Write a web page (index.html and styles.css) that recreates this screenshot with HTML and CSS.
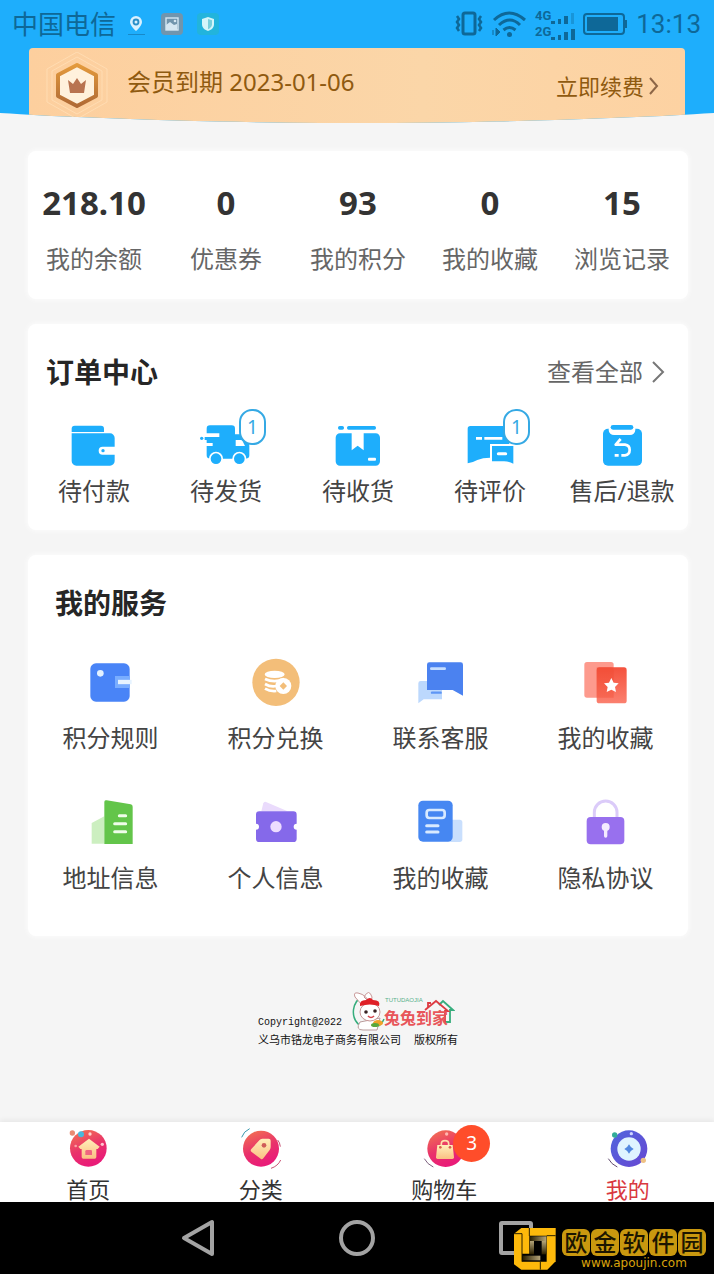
FILE: index.html
```
<!DOCTYPE html>
<html lang="zh-CN">
<head>
  <meta charset="UTF-8" />
  <meta name="viewport" content="width=device-width, initial-scale=1" />
  <title>我的</title>
  <link rel="stylesheet" href="styles.css">
</head>
<body>

<div class="status-bar">
  <span class="carrier">中国电信</span>
  <div class="status-apps">
    <svg width="24" height="24" viewBox="0 0 24 24"><path d="M12 4a6 6 0 0 0-6 6c0 4 6 9 6 9s6-5 6-9a6 6 0 0 0-6-6z" fill="#d9f1ff"/><circle cx="12" cy="10" r="3.4" fill="#2a8fc8"/><circle cx="12" cy="10" r="1.5" fill="#d9f1ff"/><path d="M4 22.5h17" stroke="#1889c9"/></svg>
    <svg width="24" height="24" viewBox="0 0 24 24"><rect x="1" y="1" width="22" height="22" rx="4" fill="#7195ad"/><rect x="6" y="6" width="12" height="12" fill="none" stroke="#d5e7f2" stroke-width="1.4"/><path d="M6 18V13l4-3 4 3 3-1v6z" fill="#d5e7f2"/><circle cx="15" cy="9" r="1.3" fill="#d5e7f2"/></svg>
    <svg width="24" height="24" viewBox="0 0 24 24"><rect x="1" y="1" width="22" height="22" rx="4" fill="#22b4dc"/><path d="M12 5l6 2v5c0 4-3 6-6 7-3-1-6-3-6-7V7z" fill="#d4f5fa"/><path d="M12 7l4 1.300v4c0 2.500-2 4-4 5z" fill="#79cfdc"/></svg>
  </div>
  <div class="status-right">
    <svg width="28" height="26" viewBox="0 0 28 26" fill="none" stroke="#0e6898"><rect x="8" y="2" width="12" height="21" rx="2" stroke-width="3"/><path d="M2 5l2 3-2 3 2 3-2 3 2 3M26 5l-2 3 2 3-2 3 2 3-2 3" stroke-width="2.500"/></svg>
    <svg width="36" height="28" viewBox="0 0 36 28" fill="none" stroke="#0e6898" stroke-width="3"><path d="M3 10q15-14 31 0M8 15q11-10 21 0M12.500 20q6-5 12 0"/><circle cx="18.500" cy="24.500" r="2.500" fill="#0e6898" stroke="none"/><path d="M5 18v8l4-4zM2 20v5" fill="#0e6898" stroke-width="1"/></svg>
    <div class="signals">
      <div class="signal"><span>4G</span><svg width="24" height="12" viewBox="0 0 24 12" fill="#0e6898"><path d="M0 9h4v3H0zM7 7h3v5H7zM13 4h4v8h-4z"/><path d="M20 1h3v11h-3z" opacity=".35"/></svg></div>
      <div class="signal"><span>2G</span><svg width="24" height="12" viewBox="0 0 24 12" fill="#0e6898"><path d="M0 9h4v3H0zM7 7h3v5H7zM13 4h4v8h-4zM20 1h4v11h-4z"/></svg></div>
    </div>
    <svg width="45" height="24" viewBox="0 0 45 24"><rect x="1" y="2" width="40" height="20" rx="3" fill="none" stroke="#0e6898" stroke-width="2"/><rect x="4" y="5" width="31" height="14" fill="#0e6898"/><path d="M42 8h2v8h-2z" fill="#0e6898"/></svg>
    <time>13:13</time>
  </div>
</div>

<header class="hero">
  <div class="member">
    <svg class="medal" width="66" height="66" viewBox="0 0 66 66">
      <defs><linearGradient id="gold" x1="0" y1="0" x2="0" y2="1"><stop offset="0" stop-color="#e39a3c"/><stop offset="1" stop-color="#b06a35"/></linearGradient></defs>
      <g fill="none" stroke="#ffdcb2"><path d="M33 0l30 17v33L33 67 3 50V17z"/><path d="M33 5l25 14v29L33 62 8 48V19z"/></g>
      <path d="M33 13l19 10v21L33 54 14 44V23z" fill="#fff1dc" stroke="url(#gold)" stroke-width="4" stroke-linejoin="round"/>
      <path d="M24 28l5 4 4-6 4 6 5-4-2 13H26z" fill="#b87350"/>
    </svg>
    <span class="member-date">会员到期 2023-01-06</span>
    <a class="renew" href="#">立即续费<svg width="10" height="18" viewBox="0 0 10 18" fill="none" stroke="#8d6647" stroke-width="2"><path d="M1 1l7 8-7 8"/></svg></a>
  </div>
</header>

<main>
  <section class="card stats">
    <a href="#"><strong>218.10</strong><span>我的余额</span></a>
    <a href="#"><strong>0</strong><span>优惠券</span></a>
    <a href="#"><strong>93</strong><span>我的积分</span></a>
    <a href="#"><strong>0</strong><span>我的收藏</span></a>
    <a href="#"><strong>15</strong><span>浏览记录</span></a>
  </section>

  <section class="card orders">
    <div class="card-head">
      <h2>订单中心</h2>
      <a class="more" href="#">查看全部<svg width="13" height="22" viewBox="0 0 13 22" fill="none" stroke="#777" stroke-width="2"><path d="M1 1l10 10L1 21"/></svg></a>
    </div>
    <div class="order-list">
      <a href="#">
        <svg class="icon" viewBox="0 0 144 144" fill="#1eaefc"><path d="M5 30V20a9 9 0 0 1 9-9h79a9 9 0 0 1 9 9v10z"/><path d="M5 34h115a14 14 0 0 1 14 14v26H98a12 12 0 0 0 0 24h36v19a14 14 0 0 1-14 14H19a14 14 0 0 1-14-14z"/><circle cx="99" cy="86" r="5"/></svg>
        <span>待付款</span>
      </a>
      <a href="#">
        <svg class="icon" viewBox="0 0 144 144" fill="#1eaefc"><path d="M14 34V20a10 10 0 0 1 10-10h65a10 10 0 0 1 10 10v17h22q5 0 9 9l10 18q2 4 2 8v28q0 10-10 10H24q-10 0-10-10V72h18v-9H14v-9h-6V45h44v-11z"/><path d="M101 54h15q4 0 6 4l7 14h-28z" fill="#fff"/><circle cx="42" cy="110" r="21" fill="#fff"/><circle cx="112" cy="110" r="21" fill="#fff"/><circle cx="42" cy="110" r="16"/><circle cx="112" cy="110" r="16"/><circle cx="-1" cy="49" r="5"/></svg>
        <em class="badge">1</em>
        <span>待发货</span>
      </a>
      <a href="#">
        <svg class="icon" viewBox="0 0 144 144" fill="#1eaefc"><rect x="12" y="12" width="18" height="11" rx="5"/><rect x="39" y="12" width="87" height="11" rx="5"/><path d="M18 34h35v51l18-14 18 14V34h36a13 13 0 0 1 13 13v71a13 13 0 0 1-13 13H18a13 13 0 0 1-13-13V47a13 13 0 0 1 13-13z"/><rect x="102" y="107" width="24" height="9" rx="3" fill="#fff"/></svg>
        <span>待收货</span>
      </a>
      <a href="#">
        <svg class="icon" viewBox="0 0 144 144" fill="#1eaefc"><path d="M5 20a8 8 0 0 1 8-8h117v54H72v41q-22 0-38 7-14 8-29 10z"/><path d="M30 49h18M55 49h54" stroke="#fff" stroke-width="8"/><path d="M78 72h64v53q-14-7-28-7H78z"/><path d="M97 95h22" stroke="#fff" stroke-width="9" stroke-linecap="round"/></svg>
        <em class="badge">1</em>
        <span>待评价</span>
      </a>
      <a href="#">
        <svg class="icon" viewBox="0 0 144 144" fill="#1eaefc"><rect x="15" y="20" width="117" height="111" rx="15"/><rect x="32" y="6" width="80" height="33" rx="16" fill="#fff"/><rect x="38" y="9" width="68" height="14" rx="7"/><path d="M68 51L53 68h28q14 2 14 16t-14 16H70M62 100H50" fill="none" stroke="#fff" stroke-width="8" stroke-linejoin="round"/></svg>
        <span>售后/退款</span>
      </a>
    </div>
  </section>

  <section class="card services">
    <h2>我的服务</h2>
    <div class="service-list">
      <a href="#">
        <svg class="icon" viewBox="0 0 144 144"><rect x="10" y="16" width="118" height="115" rx="17" fill="#4984f7"/><circle cx="40" cy="46" r="10" fill="#e3f1ff"/><path d="M84 54h44v36H84z" fill="#79adff"/><path d="M93 72h41" stroke="#e6f3ff" stroke-width="13"/></svg>
        <span>积分规则</span>
      </a>
      <a href="#">
        <svg class="icon" viewBox="0 0 144 144"><circle cx="72" cy="73" r="71" fill="#f3be79"/><ellipse cx="68" cy="49" rx="30" ry="11" fill="#fff"/><path d="M39 63q28 13 58 0M39 78q17 10 34 6M39 92q15 9 34 7" fill="none" stroke="#fff" stroke-width="8"/><circle cx="94" cy="84" r="24" fill="#fff"/><path d="M94 73l11 11-11 11-11-11z" fill="#f3be79"/></svg>
        <span>积分兑换</span>
      </a>
      <a href="#">
        <svg class="icon" viewBox="0 0 144 144"><path d="M4 76q0-7 7-7h64v55H20L4 136z" fill="#bcd8fd"/><path d="M30 20q0-7 7-7h94q7 0 7 7v93l-31-17H30z" fill="#4b82f0"/><path d="M43 32h40" stroke="#c5ddff" stroke-width="8" stroke-linecap="round"/><path d="M45 104h26" stroke="#5e96f5" stroke-width="7" stroke-linecap="round"/></svg>
        <span>联系客服</span>
      </a>
      <a href="#">
        <svg class="icon" viewBox="0 0 144 144"><defs><linearGradient id="red" x1="0" y1="0" x2="0" y2="1"><stop offset="0" stop-color="#f4523d"/><stop offset="1" stop-color="#fb806f"/></linearGradient></defs><rect x="7" y="12" width="88" height="107" rx="8" fill="#fd9a8d"/><rect x="44" y="28" width="90" height="108" rx="8" fill="url(#red)"/><path d="M44 28h43q8 0 8 8v83H44z" fill="#f0472f" opacity=".35"/><path d="M88 60l7 14 15 2-11 11 3 15-14-7-14 7 3-15-11-11 15-2z" fill="#fff"/></svg>
        <span>我的收藏</span>
      </a>
      <a href="#">
        <svg class="icon" viewBox="0 0 144 144"><path d="M14 75l38-20v82H14z" fill="#ccefc0"/><path d="M52 12q0-7 7-5l72 12q6 1 6 7v112H52z" fill="#63c54a"/><path d="M97 53h19M83 77h33M83 101h33" stroke="#effde9" stroke-width="9" stroke-linecap="round"/></svg>
        <span>地址信息</span>
      </a>
      <a href="#">
        <svg class="icon" viewBox="0 0 144 144"><path d="M28 40l6-24q2-6 8-4l65 28z" fill="#eadbfc"/><path d="M22 40h102a10 10 0 0 1 10 10v27a9 9 0 0 0 0 18v27a10 10 0 0 1-10 10H22a10 10 0 0 1-10-10V95a9 9 0 0 0 0-18V50a10 10 0 0 1 10-10z" fill="#8569ea"/><circle cx="72" cy="86" r="17" fill="#eddcff"/></svg>
        <span>个人信息</span>
      </a>
      <a href="#">
        <svg class="icon" viewBox="0 0 144 144"><rect x="90" y="65" width="46" height="67" rx="8" fill="#c9dffd"/><rect x="4" y="8" width="103" height="123" rx="14" fill="#4687f2"/><rect x="29" y="36" width="54" height="24" rx="8" fill="none" stroke="#d8eaff" stroke-width="8"/><path d="M29 83h34M29 102h34" stroke="#d8eaff" stroke-width="9" stroke-linecap="round"/></svg>
        <span>我的收藏</span>
      </a>
      <a href="#">
        <svg class="icon" viewBox="0 0 144 144"><path d="M37 62V43a34 34 0 0 1 68 0v19" fill="none" stroke="#dbcbf9" stroke-width="9"/><rect x="14" y="57" width="113" height="82" rx="12" fill="#9870ee"/><circle cx="71" cy="87" r="12" fill="#f4eaff"/><path d="M71 87v27" stroke="#f4eaff" stroke-width="10" stroke-linecap="round"/></svg>
        <span>隐私协议</span>
      </a>
    </div>
  </section>

  <footer class="copyright">
    <div class="copyright-top">
      <span>Copyright@2022</span>
      <svg width="104" height="40" viewBox="0 0 104 40">
        <path d="M12 5A18 18 0 0 0 8 34M22 36q8 0 11-8" fill="none" stroke="#36ad7d" stroke-width="1.500"/>
        <path d="M7 2q-5-1-3 4l7 8 7-2q-2-8-11-10zM13 6q5-9 8 0l-1 7z" fill="#fff" stroke="#c89797"/>
        <path d="M9 31q-5 8 3 8h14l3-12z" fill="#fff" stroke="#b99c9c"/>
        <ellipse cx="19" cy="21" rx="10" ry="9" fill="#fff" stroke="#c89797"/>
        <path d="M9 15q-1-6 6-6 4-4 7 0 8 0 6 6-9-3-19 0z" fill="#df2027"/>
        <circle cx="15" cy="21" r="1.800" fill="#382222"/><circle cx="24" cy="20" r="1.800" fill="#382222"/>
        <path d="M17 25q3 3 6 0" fill="none" stroke="#d4434a" stroke-width="1.500"/>
        <ellipse cx="27" cy="32" rx="5" ry="3" fill="#f0a32a"/><ellipse cx="24" cy="34" rx="4" ry="2" fill="#59a83c"/>
        <path d="M88 14l4-4 10 9h-3v12h-6" fill="none" stroke="#36ad7d" stroke-width="1.800"/>
        <path d="M74 19l11-9 12 10h-3v12M77 16v-4h3" fill="none" stroke="#dd3b42" stroke-width="1.800"/>
        <text class="logo-sub" x="34" y="11">TUTUDAOJIA</text>
        <text class="logo-name" x="33" y="33">兔兔到家</text>
      </svg>
    </div>
    <p>义乌市锆龙电子商务有限公司&nbsp; 版权所有</p>
  </footer>
</main>

<nav class="tab-bar">
  <a href="#">
    <svg class="tab-icon" viewBox="0 0 120 120">
      <defs>
        <linearGradient id="pink" x1="0" y1="0" x2=".4" y2="1"><stop offset="0" stop-color="#f3794f"/><stop offset=".6" stop-color="#e9316b"/><stop offset="1" stop-color="#e91c78"/></linearGradient>
        <linearGradient id="cream" x1="0" y1="0" x2="0" y2="1"><stop offset="0" stop-color="#fff0ba"/><stop offset="1" stop-color="#fbc083"/></linearGradient>
      </defs>
      <circle cx="61" cy="61" r="55" fill="url(#pink)"/><path d="M63 32l32 24-6 7h-4v24q0 5-5 5H46q-5 0-5-5V63h-4l-6-7z" fill="url(#cream)"/><path d="M52 81V70q0-4 4-4h12q4 0 4 4v11z" fill="#f06580"/><circle cx="13" cy="15" r="8" fill="#e98b73"/><circle cx="39" cy="19" r="9" fill="#48b9dc"/><circle cx="66" cy="18" r="5" fill="#ffd4cc"/><circle cx="103" cy="49" r="5" fill="#ffc6d0"/><circle cx="23" cy="54" r="4" fill="#f9a0a5"/>
    </svg>
    <span>首页</span>
  </a>
  <a href="#">
    <svg class="tab-icon" viewBox="0 0 120 120"><circle cx="60" cy="62" r="54" fill="url(#pink)"/><path d="M55 37q3-5 9-5h19q6 0 6 6v19q0 5-3 9L67 91q-4 5-8 1L31 71q-4-4 0-8z" fill="url(#cream)"/><circle cx="69" cy="52" r="7" fill="#cf5c59"/><path d="M2 28Q8 10 26 2" fill="none" stroke="#3998ac" stroke-width="3"/><path d="M119 96q-8 18-29 25M110 36q7 8 8 20" fill="none" stroke="#c85373" stroke-width="3"/></svg>
    <span>分类</span>
  </a>
  <a href="#">
    <svg class="tab-icon" viewBox="0 0 120 120"><circle cx="65" cy="62" r="55" fill="url(#pink)"/><path d="M52 56V47q0-9 11-9t11 9v9" fill="none" stroke="#ffe0ac" stroke-width="5"/><path d="M40 51h46l4 37q0 5-5 5H41q-5 0-5-5z" fill="url(#cream)"/><circle cx="49" cy="58" r="4" fill="#d9604c"/><circle cx="78" cy="58" r="4" fill="#d9604c"/><circle cx="68" cy="18" r="5" fill="#ffb8b0"/><path d="M1 92q9 17 27 25" fill="none" stroke="#7f6381" stroke-width="3"/></svg>
    <em class="cart-count">3</em>
    <span>购物车</span>
  </a>
  <a class="active" href="#">
    <svg class="tab-icon" viewBox="0 0 120 120"><defs><linearGradient id="violet" x1="0" y1="0" x2="1" y2="1"><stop offset="0" stop-color="#4f66dd"/><stop offset="1" stop-color="#6847d2"/></linearGradient></defs><circle cx="63" cy="62" r="55" fill="url(#violet)"/><circle cx="63" cy="63" r="35" fill="#dff4ff"/><path d="M63 49q4 9 14 14-10 5-14 14-4-9-14-14 10-5 14-14z" fill="#5288df"/><circle cx="20" cy="21" r="8" fill="#32ad99"/><circle cx="70" cy="17" r="5" fill="#cfd6ff"/><circle cx="106" cy="97" r="8" fill="#efc184"/><path d="M1 92q9 17 27 25" fill="none" stroke="#634c70" stroke-width="3"/></svg>
    <span>我的</span>
  </a>
</nav>

<div class="system-nav">
  <button type="button" aria-label="返回"><svg width="40" height="40" viewBox="0 0 40 40"><path d="M34 4v32L6 20z"/></svg></button>
  <button type="button" aria-label="主页"><svg width="40" height="40" viewBox="0 0 40 40"><circle cx="20" cy="20" r="16"/></svg></button>
  <button type="button" aria-label="最近"><svg width="40" height="40" viewBox="0 0 40 40"><rect x="5" y="5" width="30" height="30" rx="1"/></svg></button>
  <div class="site-mark">
    <svg width="44" height="44" viewBox="0 0 132 132">
      <defs>
        <linearGradient id="foldTop" x1="0" y1="0" x2="1" y2="0"><stop offset="0" stop-color="#2b2000"/><stop offset="1" stop-color="#b5a57a"/></linearGradient>
        <linearGradient id="foldSide" x1="0" y1="0" x2="0" y2="1"><stop offset="0" stop-color="#b5a57a"/><stop offset="1" stop-color="#2b2000"/></linearGradient>
      </defs>
      <path d="M25 3h103v100l-25 25H25L3 112V20z" fill="#fdb90b"/>
      <path d="M49 26h52v78H27V80h22z" fill="#000"/>
      <path d="M51 28h49v14H51z" fill="url(#foldTop)"/>
      <path d="M86 42h14v40H86z" fill="url(#foldSide)"/>
      <path d="M30 86h52v14H30z" fill="url(#foldTop)"/>
      <path d="M51 42h12v40H51z" fill="url(#foldSide)"/>
      <path d="M49 3v24M128 26h-27M82 104v24M3 20h24v84" fill="none" stroke="#2b2000" stroke-width="3"/>
    </svg>
    <div class="site-text">
      <div class="site-name"><b>欧</b><b>金</b><b>软</b><b>件</b><b>园</b></div>
      <div class="site-url">www.apoujin.com</div>
    </div>
  </div>
</div>

</body>
</html>
```

FILE: styles.css
```
* {
  box-sizing: border-box;
}

body {
  margin: 0;
  min-height: 100vh;
  display: flex;
  flex-direction: column;
  background: #f5f5f5;
  color: #444;
  font-family: "Noto Sans", "Noto Sans CJK SC", sans-serif;
  font-size: 24px;
  line-height: 32px;
}

a {
  color: inherit;
  text-decoration: none;
}

em {
  font-style: normal;
}

svg {
  display: block;
  flex: none;
}

h2 {
  margin: 0;
  font-size: 28px;
  line-height: 36px;
  font-weight: 700;
  color: #262626;
}

/* status bar */
.status-bar {
  display: flex;
  align-items: center;
  height: 48px;
  padding: 0 13px 0 12px;
  background: #1eaefc;
  color: #0e6898;
}

.carrier {
  font-size: 26px;
}

.status-apps {
  display: flex;
  gap: 12px;
  margin-left: 8px;
}

.status-right {
  display: flex;
  align-items: center;
  gap: 8px;
  margin-left: auto;
}

.signals {
  font: 700 13px/16px Roboto, sans-serif;
}

.signal {
  display: flex;
  align-items: flex-end;
}

.status-right time {
  font-family: Roboto, sans-serif;
  font-size: 26px;
}

/* member banner, its lower edge is one wide arc */
.hero {
  height: 75px;
  padding: 0 29px;
  background: #1eaefc;
  clip-path: ellipse(100% 100% at 50% 0);
}

.member {
  display: flex;
  align-items: flex-start;
  height: 100%;
  padding: 0 26px 0 15px;
  border-radius: 4px 4px 0 0;
  background: linear-gradient(90deg, #fdcf9e, #fbd6a8 60%, #fdd2a2);
  color: #8f5a10;
}

.medal {
  margin-top: 4px;
}

.member-date {
  margin: 18px auto 0 17px;
}

.renew {
  display: flex;
  align-items: center;
  gap: 5px;
  margin-top: 22px;
  font-size: 22px;
}

/* cards */
main {
  flex: 1;
  display: flex;
  flex-direction: column;
  gap: 25px;
  padding: 28px 26px 0 28px;
}

.card {
  border-radius: 8px;
  background: #fff;
  box-shadow: 0 0 6px #fff;
}

.stats {
  display: grid;
  grid-template-columns: repeat(5, 1fr);
  padding: 32px 0 24px;
  text-align: center;
  color: #666;
}

.stats a {
  display: flex;
  flex-direction: column;
  gap: 20px;
}

.stats strong {
  font-size: 33px;
  line-height: 40px;
  color: #333;
}

.card-head {
  display: flex;
  justify-content: space-between;
  align-items: center;
  padding: 0 23px 0 18px;
}

.more {
  display: flex;
  align-items: center;
  gap: 9px;
  color: #666;
}

.icon {
  width: 48px;
  height: 48px;
  overflow: visible;
}

.orders {
  padding: 30px 0 23px;
}

.order-list {
  display: grid;
  grid-template-columns: repeat(5, 1fr);
  margin-top: 32px;
}

.order-list a {
  position: relative;
  display: flex;
  flex-direction: column;
  align-items: center;
  gap: 5px;
}

.badge {
  position: absolute;
  top: -13px;
  left: calc(50% + 13px);
  width: 27px;
  height: 36px;
  border: 2px solid #35a9e4;
  border-radius: 13px;
  background: #fff;
  color: #35a9e4;
  font-size: 19px;
  text-align: center;
}

.services {
  padding: 30px 0 42px;
}

.services h2 {
  padding-left: 27px;
}

.service-list {
  display: grid;
  grid-template-columns: repeat(4, 1fr);
  row-gap: 44px;
  margin-top: 37px;
}

.service-list a {
  display: flex;
  flex-direction: column;
  align-items: center;
  gap: 16px;
}

/* copyright */
.copyright {
  align-self: center;
  margin: 30px 0;
  color: #111;
  font-family: "Liberation Mono", "Noto Sans CJK SC", monospace;
  font-size: 11px;
  line-height: 20px;
}

.copyright-top {
  display: flex;
  align-items: flex-end;
  gap: 9px;
}

.copyright-top span {
  font-size: 10px;
  line-height: 16px;
}

.copyright p {
  margin: 0;
}

.logo-name {
  fill: #e8555a;
  font: 700 16px "Noto Sans CJK SC", sans-serif;
}

.logo-sub {
  fill: #58b18c;
  font: 6px "Liberation Sans", sans-serif;
}

/* bottom tabs */
.tab-bar {
  display: flex;
  justify-content: space-around;
  padding: 6px 0 0 2px;
  background: #fff;
  box-shadow: 0 -2px 5px rgba(0, 0, 0, 0.06);
  color: #333;
  font-size: 22px;
  line-height: 26px;
}

.tab-bar a {
  position: relative;
  display: flex;
  flex-direction: column;
  align-items: center;
  gap: 8px;
}

.tab-bar .active {
  color: #d9393f;
}

.tab-icon {
  width: 40px;
  height: 40px;
  overflow: visible;
}

.cart-count {
  position: absolute;
  top: -3px;
  left: calc(50% + 9px);
  width: 37px;
  height: 37px;
  border-radius: 50%;
  background: #ff4d2a;
  color: #fff;
  font-size: 19px;
  line-height: 36px;
  text-align: center;
}

/* system buttons */
.system-nav {
  position: relative;
  display: flex;
  justify-content: center;
  align-items: center;
  gap: 119px;
  height: 72px;
  background: #000;
}

.system-nav button {
  padding: 0;
  border: 0;
  background: none;
  fill: none;
  stroke: #a3a3a3;
  stroke-width: 4px;
  stroke-linejoin: round;
}

.site-mark {
  position: absolute;
  right: 8px;
  bottom: 3px;
  display: flex;
  align-items: center;
  gap: 5px;
}

.site-name {
  display: flex;
  gap: 1px;
}

.site-name b {
  width: 28px;
  border-radius: 6px;
  background: #c9980f;
  color: #1c1500;
  font-size: 23px;
  font-weight: 500;
  line-height: 27px;
  text-align: center;
}

.site-url {
  color: #d9a30c;
  font: 12px/14px "DejaVu Sans", sans-serif;
  text-align: center;
}
```
